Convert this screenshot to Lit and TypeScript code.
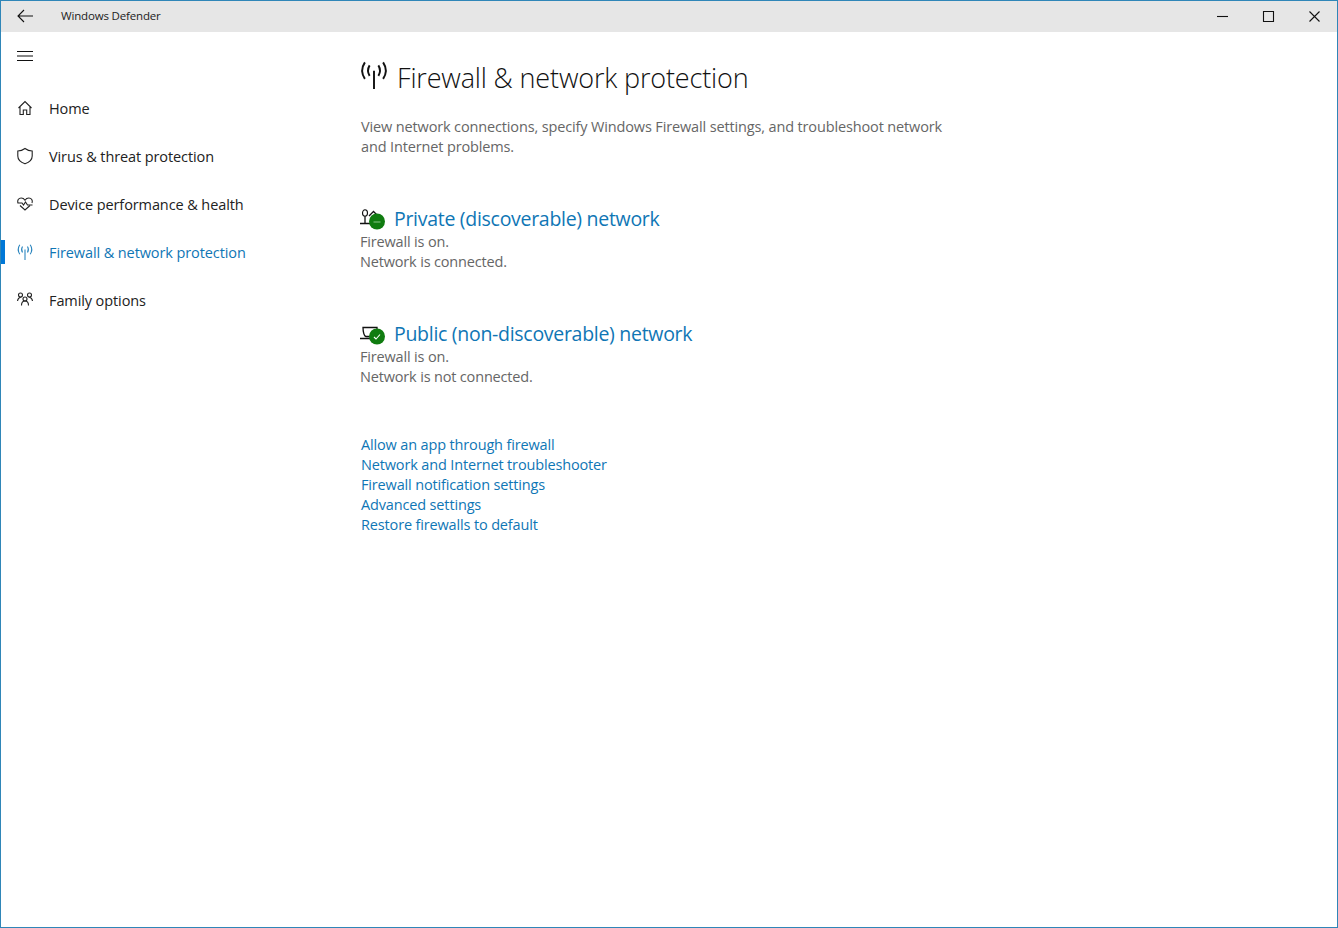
import { LitElement, html, css, svg } from "lit";
import { customElement } from "lit/decorators.js";

const antenna = svg`<path d="M8 5.500V16" /><path d="M5.500 2.500C4.400 4.300 4.400 6.700 5.500 8.500M10.500 2.500C11.600 4.300 11.600 6.700 10.500 8.500M2.800 .8C.8 3.800.8 7.200 2.800 10.200M13.200 .8C15.200 3.800 15.200 7.200 13.200 10.200" />`;

const navItems = [
  { label: "Home", icon: svg`<path d="M1.500 8 8 1.500 14.500 8M3 6.500V14.500H6.300V10h3.400v4.500H13V6.500" />` },
  { label: "Virus & threat protection", icon: svg`<path d="M8 .5C6 2 3.500 3 .8 3v5c0 3.500 2.500 6.200 7.200 7.800 4.700-1.600 7.200-4.300 7.200-7.800V3C12.500 3 10 2 8 .5Z" />` },
  { label: "Device performance & health", icon: svg`<path d="M3 9.500 8 14l5-4.500M1 7C0 4.500 1.500 2 4.200 2 6 2 7.200 3 8 4.200 8.800 3 10 2 11.800 2 14.500 2 16 4.500 15 7" /><path d="M.5 7H5l1.500 2 2-3 2 3H15.500" />` },
  { label: "Firewall & network protection", active: true, icon: antenna },
  { label: "Family options", icon: svg`<circle cx="3.500" cy="3" r="2"/><circle cx="12.500" cy="3" r="2"/><circle cx="8" cy="7" r="2"/><path d="M.5 9C.8 6.800 2 5.500 3.800 5.300M15.500 9C15.200 6.800 14 5.500 12.200 5.300M4.500 13.500C4.500 10.500 6 9 8 9s3.500 1.500 3.500 4.500" />` },
];

const links = [
  "Allow an app through firewall",
  "Network and Internet troubleshooter",
  "Firewall notification settings",
  "Advanced settings",
  "Restore firewalls to default",
];

@customElement("app-root")
export class AppRoot extends LitElement {
  static styles = css`
    :host {
      display: block;
      width: 1338px;
      height: 928px;
      font-family: "Open Sans", "Noto Sans", sans-serif;
      color: #1a1a1a;
      background: #fff;
    }
    * { box-sizing: border-box; }
    svg { fill: none; stroke: currentColor; stroke-width: 1.1; display: block; overflow: visible; }
    .window {
      width: 100%;
      height: 100%;
      border: 1px solid #2f86b8;
      display: flex;
      flex-direction: column;
    }
    .titlebar {
      height: 31px;
      flex: none;
      background: #e6e6e6;
      display: flex;
      align-items: center;
      padding-left: 16px;
      font-size: 11.500px;
      letter-spacing: -0.17px;
    }
    .back { width: 16px; height: 14px; color: #111; margin-top: -1px; }
    .title { margin-left: 28px; color: #222; margin-top: -2px; }
    .controls { margin-left: auto; display: flex; }
    .ctl { width: 46px; height: 31px; display: flex; align-items: center; justify-content: center; color: #111; margin-top: -1px; }
    .ctl svg { width: 11px; height: 11px; }
    .body { flex: 1; display: flex; }
    .nav { width: 359px; flex: none; }
    .burger { height: 52px; padding: 19px 0 0 16px; }
    .burger svg { width: 16px; height: 10px; color: #111; }
    .row {
      height: 48px;
      display: flex;
      align-items: center;
      position: relative;
      padding-left: 16px;
      font-size: 14.500px;
      letter-spacing: -0.1px;
      color: #222;
    }
    .row svg { width: 16px; height: 16px; flex: none; }
    .row span { margin-left: 16px; }
    .row.active { color: #0f76b5; }
    .row.active::before {
      content: "";
      position: absolute;
      left: 0;
      top: 12px;
      width: 4px;
      height: 24px;
      background: #0078d7;
    }
    .row.active svg { color: #2c86bf; }
    .main { flex: 1; padding-top: 27px; }
    .heading { display: flex; align-items: center; height: 36px; }
    .heading svg { width: 28px; height: 28px; color: #111; margin-top: -4px; }
    .heading h1 {
      margin: 0 0 0 9px;
      font-size: 27px;
      font-weight: 300;
      letter-spacing: -0.16px;
      color: #111;
    }
    .intro {
      margin: 22px 0 0 1px;
      width: 590px;
      font-size: 14.500px;
      line-height: 20px;
      letter-spacing: -0.14px;
      color: #666;
    }
    .network { margin-top: 46px; }
    .network + .network { margin-top: 46px; }
    .net-head { display: flex; align-items: center; height: 29px; padding-top: 2px; }
    .net-icon { width: 25px; height: 22px; flex: none; color: #111; margin-right: 9px; }
    .net-icon svg { width: 25px; height: 22px; }
    .net-head a {
      font-size: 19.500px;
      letter-spacing: -0.29px;
      color: #0f76b5;
    }
    .status {
      font-size: 14.500px;
      line-height: 20px;
      letter-spacing: -0.17px;
      color: #666;
    }
    .links { margin: 48px 0 0 1px; display: flex; flex-direction: column; }
    .links a {
      font-size: 14.500px;
      line-height: 20px;
      letter-spacing: -0.15px;
      color: #0f76b5;
    }
  `;

  render() {
    return html`
      <div class="window">
        <header class="titlebar">
          <svg class="back" viewBox="0 0 16 14"><path d="M7 1 1 7l6 6M1 7h15" /></svg>
          <div class="title">Windows Defender</div>
          <div class="controls">
            <div class="ctl"><svg viewBox="0 0 11 11"><path d="M0 5.500h11" /></svg></div>
            <div class="ctl"><svg viewBox="0 0 11 11"><path d="M.5.5h10v10H.5z" /></svg></div>
            <div class="ctl"><svg viewBox="0 0 11 11"><path d="m.5.5 10 10M10.500.5l-10 10" /></svg></div>
          </div>
        </header>
        <div class="body">
          <nav class="nav">
            <div class="burger"><svg viewBox="0 0 16 10"><path d="M0 .5h16M0 5h16M0 9.500h16" /></svg></div>
            ${navItems.map(
              (n) => html`<div class="row ${n.active ? "active" : ""}">
                <svg viewBox="0 0 16 16">${n.icon}</svg><span>${n.label}</span>
              </div>`
            )}
          </nav>
          <main class="main">
            <div class="heading">
              <svg viewBox="0 0 16 16">${antenna}</svg>
              <h1>Firewall &amp; network protection</h1>
            </div>
            <p class="intro">View network connections, specify Windows Firewall settings, and troubleshoot network and Internet problems.</p>
            <section class="network">
              <div class="net-head">
                <div class="net-icon">
                  <svg viewBox="0 0 25 22">
                    <ellipse cx="5" cy="5" rx="2.500" ry="3.200"/><path d="M5 8.200V15M0 15.500h12M9 8l4.500-4.500L18 8" stroke-width="1.300"/>
                    <circle cx="17" cy="13.500" r="8" fill="#107c10" stroke="none"/>
                    <path d="M13.500 14h7" stroke="#7fbf7f" />
                  </svg>
                </div>
                <a>Private (discoverable) network</a>
              </div>
              <div class="status">Firewall is on.</div>
              <div class="status">Network is connected.</div>
            </section>
            <section class="network">
              <div class="net-head">
                <div class="net-icon">
                  <svg viewBox="0 0 25 22">
                    <path d="M3 4.500h14v9H6C4 13.500 3 8 3 4.500ZM0 15.500h12" stroke-width="1.300"/>
                    <circle cx="17" cy="13.500" r="8" fill="#107c10" stroke="none"/>
                    <path d="m14 14 2 2 4-4.500" stroke="#fff" />
                  </svg>
                </div>
                <a>Public (non-discoverable) network</a>
              </div>
              <div class="status">Firewall is on.</div>
              <div class="status">Network is not connected.</div>
            </section>
            <div class="links">${links.map((l) => html`<a>${l}</a>`)}</div>
          </main>
        </div>
      </div>
    `;
  }
}
